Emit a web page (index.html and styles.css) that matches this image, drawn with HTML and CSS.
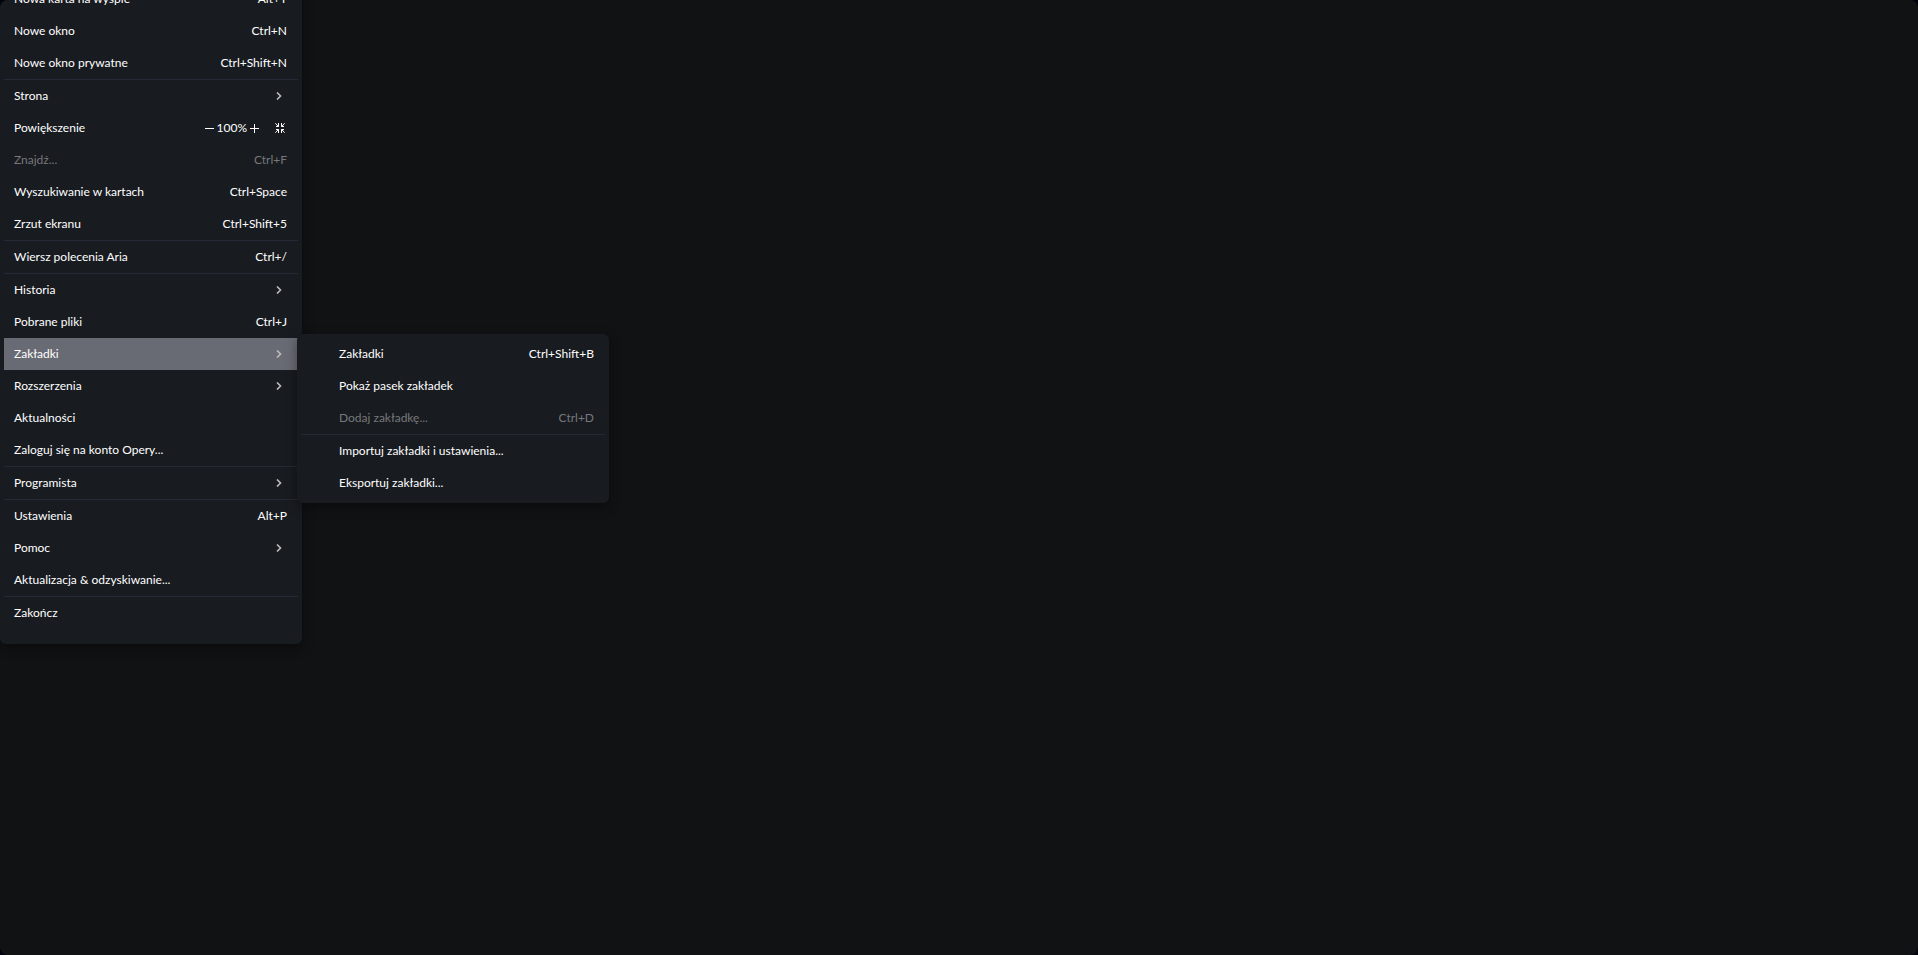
FILE: index.html
```
<!DOCTYPE html>
<html lang="pl">
<head>
    <meta charset="UTF-8">
    <meta name="viewport" content="width=device-width, initial-scale=1.0">
    <title>Menu</title>
    <link rel="stylesheet" href="styles.css">
</head>
<body>
    <svg class="sprite" aria-hidden="true">
        <symbol id="chevron" viewBox="0 0 6 8">
            <path d="M1 0.5L4.5 4L1 7.5" fill="none" stroke="currentColor" stroke-width="1.6"/>
        </symbol>
        <symbol id="fullscreen" viewBox="0 0 10 10">
            <path d="M1 3.5H3.5V0M0.3 0.3L3.5 3.5M9 3.5H6.5V0M9.7 0.3L6.5 3.5M1 6.5H3.5V10M0.3 9.7L3.5 6.5M9 6.5H6.5V10M9.7 9.7L6.5 6.5" fill="none" stroke="currentColor"/>
        </symbol>
    </svg>
    <main class="window">
        <ul class="menu main-menu">
            <li><button class="item">Nowa karta na wyspie <span>Alt+T</span></button></li>
            <li><button class="item">Nowe okno <span>Ctrl+N</span></button></li>
            <li><button class="item">Nowe okno prywatne <span>Ctrl+Shift+N</span></button></li>
            <li class="separator"></li>
            <li><button class="item">Strona <svg class="chevron"><use href="#chevron"/></svg></button></li>
            <li class="item">
                Powiększenie
                <div class="zoom">
                    <button class="zoom-button" aria-label="Pomniejsz"><svg class="sign" viewBox="0 0 9 9"><path d="M0 4.5H9" stroke="currentColor"/></svg></button>
                    <span>100%</span>
                    <button class="zoom-button" aria-label="Powiększ"><svg class="sign" viewBox="0 0 9 9"><path d="M0 4.5H9M4.5 0V9" stroke="currentColor"/></svg></button>
                    <button class="zoom-button fullscreen" aria-label="Pełny ekran"><svg class="fullscreen-icon"><use href="#fullscreen"/></svg></button>
                </div>
            </li>
            <li><button class="item" disabled>Znajdź... <span>Ctrl+F</span></button></li>
            <li><button class="item">Wyszukiwanie w kartach <span>Ctrl+Space</span></button></li>
            <li><button class="item">Zrzut ekranu <span>Ctrl+Shift+5</span></button></li>
            <li class="separator"></li>
            <li><button class="item">Wiersz polecenia Aria <span>Ctrl+/</span></button></li>
            <li class="separator"></li>
            <li><button class="item">Historia <svg class="chevron"><use href="#chevron"/></svg></button></li>
            <li><button class="item">Pobrane pliki <span>Ctrl+J</span></button></li>
            <li class="parent">
                <button class="item active" aria-expanded="true">Zakładki <svg class="chevron"><use href="#chevron"/></svg></button>
                <ul class="menu submenu">
                    <li><button class="item">Zakładki <span>Ctrl+Shift+B</span></button></li>
                    <li><button class="item">Pokaż pasek zakładek</button></li>
                    <li><button class="item" disabled>Dodaj zakładkę... <span>Ctrl+D</span></button></li>
                    <li class="separator"></li>
                    <li><button class="item">Importuj zakładki i ustawienia...</button></li>
                    <li><button class="item">Eksportuj zakładki...</button></li>
                </ul>
            </li>
            <li><button class="item">Rozszerzenia <svg class="chevron"><use href="#chevron"/></svg></button></li>
            <li><button class="item">Aktualności</button></li>
            <li><button class="item">Zaloguj się na konto Opery...</button></li>
            <li class="separator"></li>
            <li><button class="item">Programista <svg class="chevron"><use href="#chevron"/></svg></button></li>
            <li class="separator"></li>
            <li><button class="item">Ustawienia <span>Alt+P</span></button></li>
            <li><button class="item">Pomoc <svg class="chevron"><use href="#chevron"/></svg></button></li>
            <li><button class="item">Aktualizacja &amp; odzyskiwanie...</button></li>
            <li class="separator"></li>
            <li><button class="item">Zakończ</button></li>
        </ul>
    </main>
</body>
</html>
```

FILE: styles.css
```
* {
    box-sizing: border-box;
}

body {
    margin: 0;
    background: #02020c;
    color: #fff;
    font-family: Lato, 'Open Sans', sans-serif;
    font-size: 12px;
    line-height: 16px;
}

.sprite {
    display: none;
}

.window {
    display: flex;
    align-items: flex-start;
    height: 100vh;
    overflow: hidden;
    border-radius: 8px;
    background: #111213;
}

/* Menus */
.menu {
    margin: 0;
    padding: 4px;
    list-style: none;
    background: #181b20;
    border-radius: 6px;
    box-shadow: 0 4px 12px rgba(0, 0, 0, 0.4);
}

/* The top of the menu is scrolled out of the window */
.main-menu {
    width: 302px;
    margin-top: -21px;
    padding-bottom: 15px;
}

.item {
    display: flex;
    align-items: center;
    justify-content: space-between;
    width: 100%;
    height: 32px;
    padding: 0 11px 0 10px;
    border: 0;
    background: none;
    color: inherit;
    font: inherit;
    text-align: left;
    white-space: nowrap;
}

.item:disabled {
    color: #77787a;
}

.item.active {
    background: #696b74;
}

.separator {
    height: 1px;
    background: #262935;
}

.chevron {
    width: 6px;
    height: 8px;
    margin-right: 5px;
    color: #bbb;
}

/* Bookmarks submenu */
.parent {
    position: relative;
}

.submenu {
    position: absolute;
    top: -4px;
    left: calc(100% - 1px);
    width: 312px;
}

.submenu .item {
    padding: 0 11px 0 38px;
}

/* Zoom controls */
.zoom {
    display: flex;
    align-items: center;
    gap: 3px;
}

.zoom-button {
    display: flex;
    padding: 0;
    border: 0;
    background: none;
    color: inherit;
}

.sign {
    width: 9px;
    height: 9px;
}

.fullscreen {
    margin: 0 2px 0 13px;
}

.fullscreen-icon {
    width: 10px;
    height: 10px;
}
```
